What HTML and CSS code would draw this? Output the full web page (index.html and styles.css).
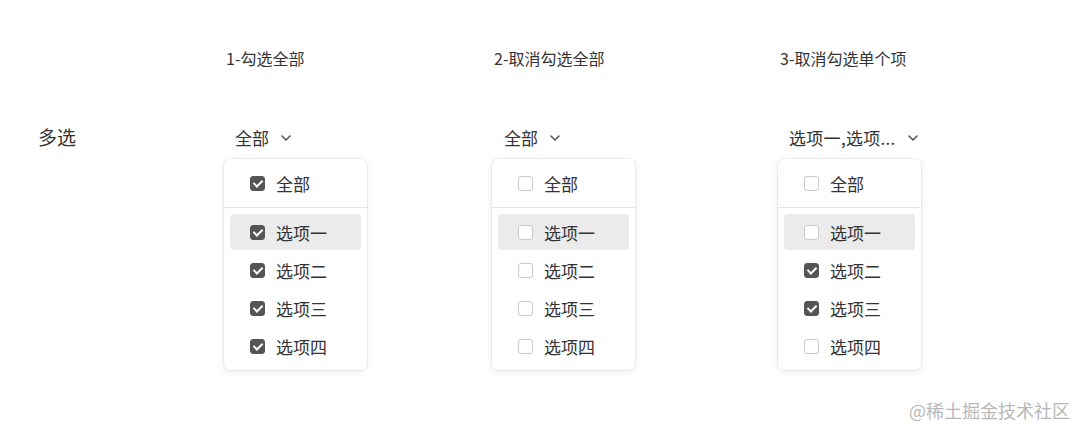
FILE: index.html
```html
<!DOCTYPE html>
<html lang="zh">
<head>
<meta charset="utf-8">
<link rel="stylesheet" href="styles.css">
</head>
<body>
<div class="page">
  <div class="grid">
    <div></div>
    <div class="title">1-勾选全部</div>
    <div class="title">2-取消勾选全部</div>
    <div class="title">3-取消勾选单个项</div>

    <div class="label">多选</div>

    <div class="col">
      <div class="trigger"><span>全部</span><svg class="chev" viewBox="0 0 10 6" width="10" height="6"><path d="M1 1l4 4 4-4" fill="none" stroke="#555" stroke-width="1.6" stroke-linecap="round" stroke-linejoin="round"/></svg></div>
      <div class="panel">
        <div class="head"><span class="cb on"></span><span>全部</span></div>
        <div class="list">
          <div class="item hover"><span class="cb on"></span><span>选项一</span></div>
          <div class="item"><span class="cb on"></span><span>选项二</span></div>
          <div class="item"><span class="cb on"></span><span>选项三</span></div>
          <div class="item"><span class="cb on"></span><span>选项四</span></div>
        </div>
      </div>
    </div>

    <div class="col">
      <div class="trigger t2"><span>全部</span><svg class="chev" viewBox="0 0 10 6" width="10" height="6"><path d="M1 1l4 4 4-4" fill="none" stroke="#555" stroke-width="1.6" stroke-linecap="round" stroke-linejoin="round"/></svg></div>
      <div class="panel">
        <div class="head"><span class="cb"></span><span>全部</span></div>
        <div class="list">
          <div class="item hover"><span class="cb"></span><span>选项一</span></div>
          <div class="item"><span class="cb"></span><span>选项二</span></div>
          <div class="item"><span class="cb"></span><span>选项三</span></div>
          <div class="item"><span class="cb"></span><span>选项四</span></div>
        </div>
      </div>
    </div>

    <div class="col">
      <div class="trigger"><span class="multi">选项一,选项...</span><svg class="chev" viewBox="0 0 10 6" width="10" height="6"><path d="M1 1l4 4 4-4" fill="none" stroke="#555" stroke-width="1.6" stroke-linecap="round" stroke-linejoin="round"/></svg></div>
      <div class="panel">
        <div class="head"><span class="cb"></span><span>全部</span></div>
        <div class="list">
          <div class="item hover"><span class="cb"></span><span>选项一</span></div>
          <div class="item"><span class="cb on"></span><span>选项二</span></div>
          <div class="item"><span class="cb on"></span><span>选项三</span></div>
          <div class="item"><span class="cb"></span><span>选项四</span></div>
        </div>
      </div>
    </div>
  </div>
  <div class="watermark">@稀土掘金技术社区</div>
</div>
</body>
</html>
```

FILE: styles.css
```css
* { box-sizing: border-box; }
html, body { margin: 0; padding: 0; background: #fff; }
body {
  font-family: "Noto Sans CJK SC", "Noto Sans", sans-serif;
  color: #333;
  width: 1077px;
  height: 427px;
  overflow: hidden;
}
.page {
  position: relative;
  width: 1077px;
  height: 427px;
}
.grid {
  display: grid;
  grid-template-columns: 224px 268px 286px 1fr;
  grid-template-rows: 121px auto;
}
.title {
  font-size: 16px;
  line-height: 20px;
  padding-top: 48px;
  padding-left: 2px;
  color: #333;
}
.label {
  font-size: 19px;
  line-height: 32px;
  padding-left: 38px;
  color: #333;
}
.col {
  display: flex;
  flex-direction: column;
  align-items: flex-start;
}
.trigger {
  height: 32px;
  display: flex;
  align-items: center;
  gap: 12px;
  padding-left: 11px;
  font-size: 17px;
}
.trigger.t2 { padding-left: 12px; }
.multi { letter-spacing: 0.3px; }
.chev { display: block; margin-top: 1px; }
.panel {
  margin-top: 6px;
  width: 143px;
  background: #fff;
  border-radius: 6px;
  box-shadow: 0 0 0 1px rgba(0,0,0,0.05), 0 2px 8px rgba(0,0,0,0.08);
  overflow: hidden;
}
.head {
  height: 49px;
  border-bottom: 1px solid #e6e6e6;
  display: flex;
  align-items: center;
  gap: 11px;
  padding-left: 26px;
  font-size: 17px;
}
.list {
  padding: 6px;
  display: flex;
  flex-direction: column;
  gap: 2px;
}
.item {
  height: 36px;
  display: flex;
  align-items: center;
  gap: 11px;
  padding-left: 20px;
  border-radius: 4px;
  font-size: 17px;
}
.item.hover { background: #ebebeb; }
.cb {
  width: 15px;
  height: 15px;
  border-radius: 3px;
  border: 1px solid #c9c9c9;
  background: #fff;
  flex: none;
  position: relative;
}
.cb.on {
  background: #555;
  border-color: #555;
}
.cb.on::after {
  content: "";
  position: absolute;
  left: 4px;
  top: 1.5px;
  width: 4px;
  height: 7px;
  border: solid #fff;
  border-width: 0 2px 2px 0;
  transform: rotate(45deg);
}
.watermark {
  position: absolute;
  right: 7px;
  bottom: 5px;
  font-size: 18px;
  color: #b8b8b8;
  line-height: 24px;
}
```
